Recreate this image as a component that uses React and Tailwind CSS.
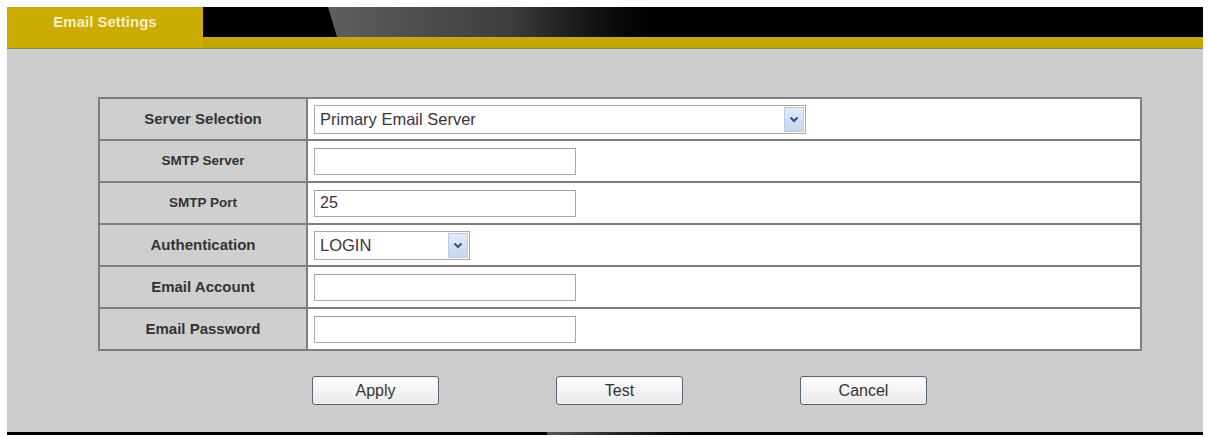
import React from "react";

const font = { fontFamily: '"Liberation Sans", Arial, sans-serif' };

function Chevron() {
  return (
    <svg width="10" height="7" viewBox="0 0 10 7">
      <path d="M1.5 1.5 L5 5 L8.5 1.5" fill="none" stroke="#34558c" strokeWidth="2.2" />
    </svg>
  );
}

function Select({ value, width }) {
  return (
    <div
      className="flex h-[29px] items-center border border-[#a8a8a8] bg-white pl-[5px] pr-px"
      style={{ width }}
    >
      <span className="flex-1 text-[16.5px] text-[#3a3440]">{value}</span>
      <div className="flex h-[25px] w-[20px] items-center justify-center border border-[#bccbe2] bg-gradient-to-b from-[#e3ebf8] to-[#c6d6ef]">
        <Chevron />
      </div>
    </div>
  );
}

function TextInput({ value }) {
  return (
    <div className="flex h-[27px] w-[262px] items-center border border-[#a9a9a9] border-t-[#9c9c9c] bg-white pl-[5px] text-[16px] text-[#3a3440]">
      {value}
    </div>
  );
}

function Row({ label, small, children, first }) {
  return (
    <div className={`flex ${first ? "h-[40px]" : "h-[42px] border-t-2 border-[#7e7e7e]"}`}>
      <div
        className={`flex w-[208px] items-center justify-center border-r-2 border-[#7e7e7e] bg-[#cfcfcf] font-bold text-[#333333] ${
          small ? "text-[13.5px]" : "text-[15px]"
        }`}
      >
        {label}
      </div>
      <div className="flex flex-1 items-center bg-white pl-[4px]">{children}</div>
    </div>
  );
}

function Button({ children }) {
  return (
    <div className="flex h-[29px] w-[127px] items-center justify-center rounded-[3px] border border-[#55687a] bg-gradient-to-b from-white to-[#e9e9e9] text-[16px] text-[#333333] shadow-[inset_0_0_0_1px_#f4f4f4]">
      {children}
    </div>
  );
}

export default function App() {
  return (
    <div className="h-[437px] w-[1209px] bg-white pl-[7px] pr-[6px] pt-[7px]" style={font}>
      {/* header */}
      <div className="flex h-[41px]">
        <div className="flex w-[196px] flex-col bg-[#cbac03]">
          <div className="flex h-[30px] items-center justify-center text-[15px] font-bold text-[#f6efbf]">
            Email Settings
          </div>
        </div>
        <div className="flex flex-1 flex-col">
          <div className="relative h-[30px] overflow-hidden bg-black">
            <div
              className="absolute inset-y-0 left-[125px] w-[360px] bg-gradient-to-r from-[#5d5f61] via-[#3d3e3f] to-black"
              style={{ clipPath: "polygon(0 0, 100% 0, 100% 100%, 9px 100%)" }}
            />
          </div>
          <div className="h-[11px] bg-gradient-to-b from-[#c8aa02] to-[#c1a300]" />
        </div>
      </div>
      <div className="h-px bg-[#8b8457]" />
      {/* body */}
      <div className="flex h-[383px] flex-col bg-[#cccccc] pt-[48px]">
        <div className="ml-[91px] w-[1044px] border-2 border-[#7e7e7e]">
          <Row label="Server Selection" first>
            <div className="pl-[2px]">
              <Select value="Primary Email Server" width={492} />
            </div>
          </Row>
          <Row label="SMTP Server" small>
            <div className="pl-[2px]"><TextInput value="" /></div>
          </Row>
          <Row label="SMTP Port" small>
            <div className="pl-[2px]"><TextInput value="25" /></div>
          </Row>
          <Row label="Authentication">
            <div className="pl-[2px]">
              <Select value="LOGIN" width={156} />
            </div>
          </Row>
          <Row label="Email Account">
            <div className="pl-[2px]"><TextInput value="" /></div>
          </Row>
          <Row label="Email Password">
            <div className="pl-[2px]"><TextInput value="" /></div>
          </Row>
        </div>
        <div className="ml-[305px] mt-[25px] flex gap-[117px]">
          <Button>Apply</Button>
          <Button>Test</Button>
          <Button>Cancel</Button>
        </div>
      </div>
      <div className="h-[3px] bg-black">
        <div className="ml-[540px] h-full w-[180px] bg-gradient-to-r from-[#555] to-black" />
      </div>
    </div>
  );
}
